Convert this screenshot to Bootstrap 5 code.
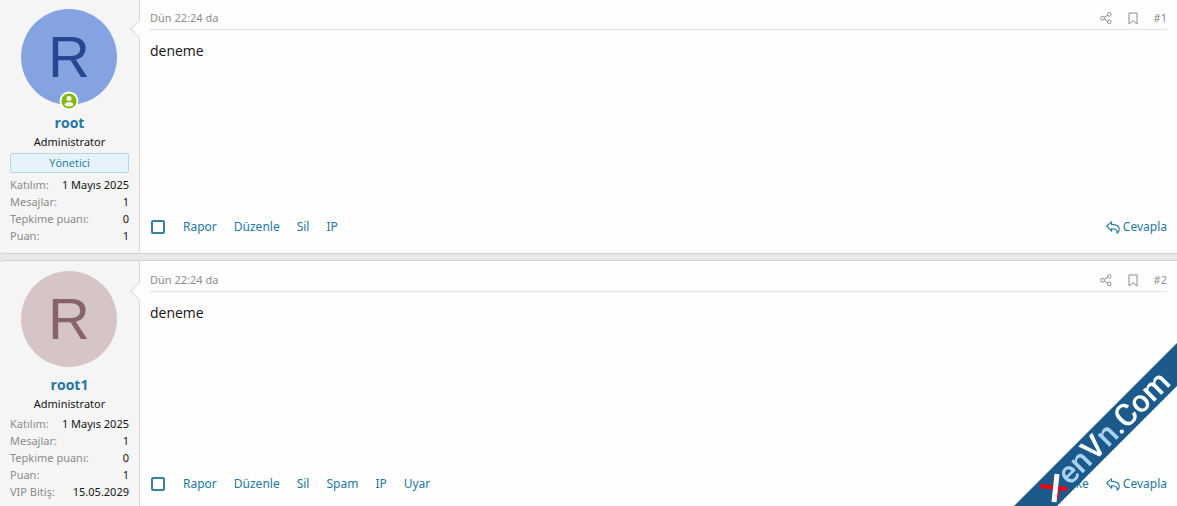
<!DOCTYPE html>
<html lang="tr">
<head>
<meta charset="utf-8">
<meta name="viewport" content="width=device-width, initial-scale=1">
<title>deneme</title>
<link href="https://cdn.jsdelivr.net/npm/bootstrap@5.3.0/dist/css/bootstrap.min.css" rel="stylesheet">
<style>
  body { font-family: "Noto Sans", "Open Sans", sans-serif; font-size: 14px; line-height: 20px; color: #141414; background: #e8e8e8; }
  a { color: #2577a1; text-decoration: none; }
  a:hover { text-decoration: underline; }
  .post { background: #fefefe; border: 1px solid #cfcfcf; border-width: 1px 0; border-radius: 4px 0 0 4px; }
  .post-first { border-top: 0; border-top-left-radius: 0; }
  .post-last { margin-top: 6px; border-bottom: 0; border-bottom-left-radius: 0; }
  .post-user { width: 140px; flex: none; padding: 10px 10px 9px; background: #f5f5f5; border-right: 1px solid #d8d8d8; border-radius: 4px 0 0 4px; position: relative; }
  .post-first .post-user { padding-top: 9px; }
  .post-last .post-user { padding-bottom: 6px; border-bottom-left-radius: 0; }
  .post-user::after { content: ""; position: absolute; right: -8px; top: 23px; width: 14px; height: 14px; background: #fefefe; border: 1px solid #d8d8d8; border-width: 0 0 1px 1px; transform: rotate(45deg); clip-path: polygon(0 0, 100% 100%, 0 100%); }
  .post-first .post-user::after { top: 22px; }
  .avatar { width: 96px; height: 96px; margin-left: 11px; font: 58px/96px "Liberation Sans", Arial, sans-serif; text-align: center; border-radius: 50%; position: relative; display: block; }
  .avatar:hover { text-decoration: none; }
  .avatar-blue { background: #85a3e0; color: #24478f; }
  .avatar-rose { background: #d6c5c7; color: #87646a; }
  .online { position: absolute; left: 38px; bottom: -6px; }
  .user-name { font-family: "Open Sans", sans-serif; font-size: 14px; font-weight: 700; line-height: 20px; margin-top: 8px; }
  .user-title { font-size: 11px; line-height: 18px; }
  .user-banner { font-family: "Open Sans", sans-serif; font-size: 11px; line-height: 18px; color: #2577a1; background: #e6f3fb; border: 1px solid #b3d6ea; border-radius: 2px; margin: 2px 0 3px; }
  .user-stats { font-size: 11px; line-height: 17px; margin: 0; }
  .post-last .user-stats { margin-top: 2px; }
  .user-stats dt { font-weight: 400; color: #8c8c8c; }
  .user-stats dd { margin: 0; white-space: nowrap; }
  .post-main { padding: 9px 10px 16px; }
  .post-first .post-main { padding-top: 8px; }
  .post-last .post-main { padding-bottom: 12px; }
  .post-head { font-size: 11px; line-height: 20px; padding-bottom: 1px; border-bottom: 1px solid #e2e2e2; }
  .post-head, .post-head a { color: #8c8c8c; }
  .post-text { font-family: "Open Sans", sans-serif; margin: 11px 0; }
  .post-actions { font-size: 12px; line-height: 20px; }
  .post-actions > div { column-gap: 17px; }
  .reply-link { column-gap: 3px; }
  .pick { appearance: none; width: 14px; height: 14px; margin: 0 1px; border: 2px solid #3a7fa3; border-radius: 2px; background: #fefefe; }
  .pick:checked { background: #3a7fa3; }
  .ribbon { position: fixed; right: 0; bottom: 0; pointer-events: none; }
</style>
</head>
<body>
<svg class="d-none">
  <symbol id="share" viewBox="0 0 12 12"><g fill="none" stroke="currentColor"><circle cx="2.5" cy="6.2" r="1.9"/><circle cx="9.3" cy="2.4" r="1.8"/><circle cx="9.3" cy="9.8" r="1.8"/><path d="M4.2 5.3 7.7 3.3M4.2 7.1l3.5 1.9"/></g></symbol>
  <symbol id="bookmark" viewBox="0 0 10 13"><path d="M1 1h8v11L5 8.6 1 12z" fill="none" stroke="currentColor" stroke-linejoin="round"/></symbol>
  <symbol id="reply" viewBox="0 0 14 13"><path d="M.7 5 5.6.8v2.6c4.5.1 7.7 1 7.7 4.900 0 1.700-.9 3.100-2.300 3.900.8-2.900-.9-4.400-5.400-4.500v2.400z" fill="none" stroke="currentColor" stroke-width="1.100" stroke-linejoin="round"/></symbol>
</svg>

<main class="d-flex flex-column">
  <article class="post post-first d-flex">
    <section class="post-user">
      <a href="#" class="avatar avatar-blue">R
        <svg class="online" width="20" height="20" viewBox="0 0 20 20" role="img" aria-label="online"><circle cx="10" cy="10" r="9.500" fill="#fff"/><circle cx="10" cy="10" r="7.600" fill="#7fb900"/><circle cx="10" cy="7.600" r="2.500" fill="#fff"/><path d="M5.500 14c.3-2 1.600-2.800 3-2.800h3c1.400 0 2.700.8 3 2.800-2.400 2-6.600 2-9 0z" fill="#fff"/></svg>
      </a>
      <div class="user-name text-center"><a href="#">root</a></div>
      <div class="user-title text-center">Administrator</div>
      <div class="user-banner text-center">Yönetici</div>
      <dl class="user-stats">
        <div class="d-flex justify-content-between"><dt>Katılım:</dt><dd>1 Mayıs 2025</dd></div>
        <div class="d-flex justify-content-between"><dt>Mesajlar:</dt><dd>1</dd></div>
        <div class="d-flex justify-content-between"><dt>Tepkime puanı:</dt><dd>0</dd></div>
        <div class="d-flex justify-content-between"><dt>Puan:</dt><dd>1</dd></div>
      </dl>
    </section>
    <section class="post-main d-flex flex-column flex-grow-1">
      <header class="post-head d-flex justify-content-between">
        <a href="#">Dün 22:24 da</a>
        <div class="d-flex align-items-center gap-3">
          <a href="#" class="d-flex" aria-label="Paylaş"><svg width="12" height="12"><use href="#share"/></svg></a>
          <a href="#" class="d-flex" aria-label="Yer imi"><svg width="10" height="13"><use href="#bookmark"/></svg></a>
          <a href="#">#1</a>
        </div>
      </header>
      <div class="post-text">deneme</div>
      <footer class="post-actions d-flex justify-content-between mt-auto">
        <div class="d-flex align-items-center">
          <input type="checkbox" class="pick" aria-label="Mesajı seç">
          <a href="#">Rapor</a><a href="#">Düzenle</a><a href="#">Sil</a><a href="#">IP</a>
        </div>
        <a href="#" class="reply-link d-flex align-items-center"><svg width="14" height="13"><use href="#reply"/></svg>Cevapla</a>
      </footer>
    </section>
  </article>

  <article class="post post-last d-flex">
    <section class="post-user">
      <a href="#" class="avatar avatar-rose">R</a>
      <div class="user-name text-center"><a href="#">root1</a></div>
      <div class="user-title text-center">Administrator</div>
      <dl class="user-stats">
        <div class="d-flex justify-content-between"><dt>Katılım:</dt><dd>1 Mayıs 2025</dd></div>
        <div class="d-flex justify-content-between"><dt>Mesajlar:</dt><dd>1</dd></div>
        <div class="d-flex justify-content-between"><dt>Tepkime puanı:</dt><dd>0</dd></div>
        <div class="d-flex justify-content-between"><dt>Puan:</dt><dd>1</dd></div>
        <div class="d-flex justify-content-between"><dt>VIP Bitiş:</dt><dd>15.05.2029</dd></div>
      </dl>
    </section>
    <section class="post-main d-flex flex-column flex-grow-1">
      <header class="post-head d-flex justify-content-between">
        <a href="#">Dün 22:24 da</a>
        <div class="d-flex align-items-center gap-3">
          <a href="#" class="d-flex" aria-label="Paylaş"><svg width="12" height="12"><use href="#share"/></svg></a>
          <a href="#" class="d-flex" aria-label="Yer imi"><svg width="10" height="13"><use href="#bookmark"/></svg></a>
          <a href="#">#2</a>
        </div>
      </header>
      <div class="post-text">deneme</div>
      <footer class="post-actions d-flex justify-content-between mt-auto">
        <div class="d-flex align-items-center">
          <input type="checkbox" class="pick" aria-label="Mesajı seç">
          <a href="#">Rapor</a><a href="#">Düzenle</a><a href="#">Sil</a><a href="#">Spam</a><a href="#">IP</a><a href="#">Uyar</a>
        </div>
        <div class="d-flex">
          <a href="#">Like</a>
          <a href="#" class="reply-link d-flex align-items-center"><svg width="14" height="13"><use href="#reply"/></svg>Cevapla</a>
        </div>
      </footer>
    </section>
  </article>
</main>

<!-- corner ribbon -->
<svg class="ribbon" width="163" height="163" viewBox="0 0 163 163" role="img" aria-label="XenVn.Com">
  <path d="M0 163 163 0v43L43 163z" fill="#1b5a8a"/>
  <g transform="translate(43 156) rotate(-45)">
    <text font-family="Roboto, sans-serif" font-size="31" font-weight="500" fill="#fff"><tspan font-size="24" fill="#f5000f">X</tspan><tspan dx="3" fill="#a9d3f5">en</tspan><tspan>V</tspan><tspan fill="#a9d3f5">n</tspan><tspan>.Com</tspan></text>
  </g>
  <path d="M26 143l27 3" stroke="#f5000f" stroke-width="4"/>
  <path d="M43 131l-3 28" stroke="#fff" stroke-width="5"/>
</svg>
<script src="https://cdn.jsdelivr.net/npm/bootstrap@5.3.0/dist/js/bootstrap.bundle.min.js"></script>
</body>
</html>
